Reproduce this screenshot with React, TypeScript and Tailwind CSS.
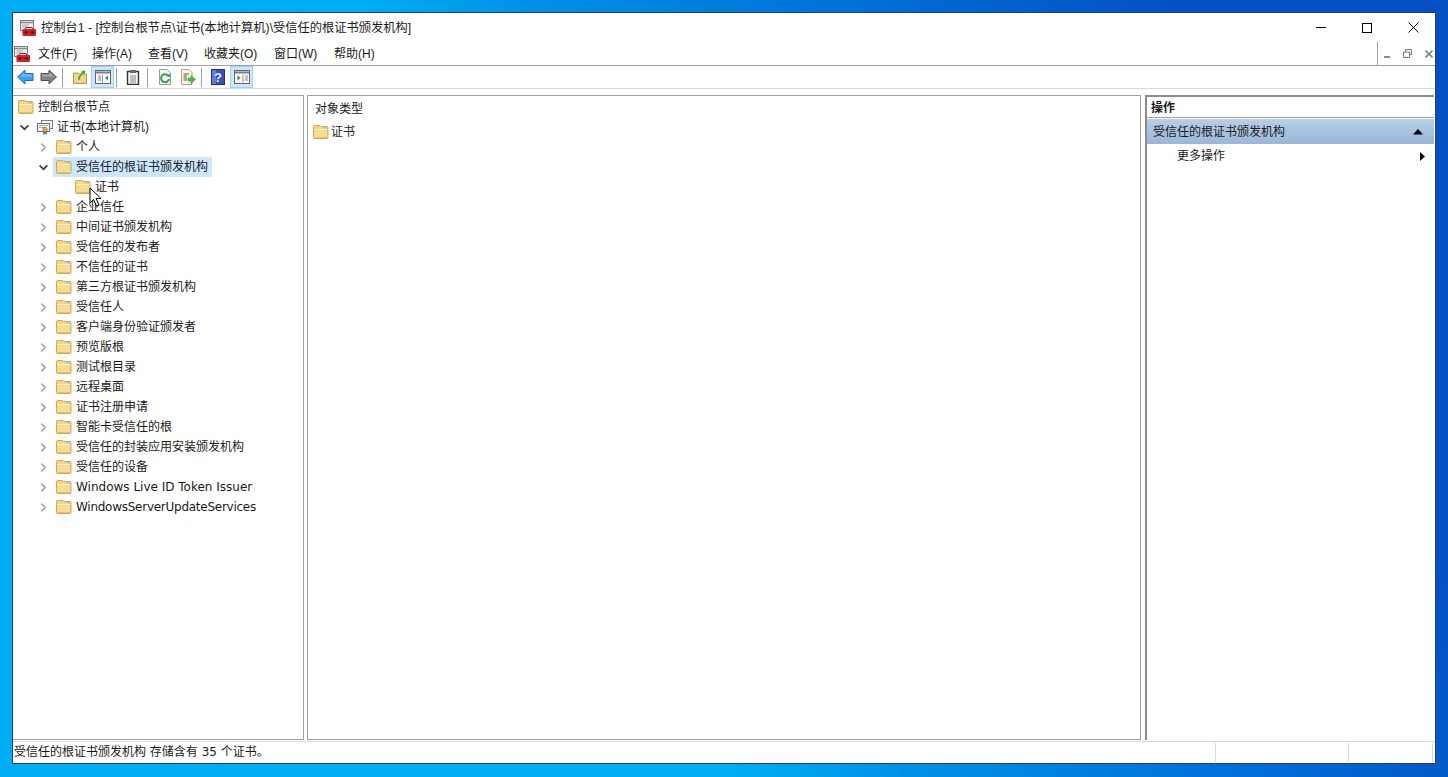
import React from 'react'

const FONT = "font-['Liberation_Sans','Noto_Sans_CJK_SC',sans-serif]"
const WIDE = "font-['DejaVu_Sans','Noto_Sans_CJK_SC',sans-serif]"

const TREE = [
  '企业信任',
  '中间证书颁发机构',
  '受信任的发布者',
  '不信任的证书',
  '第三方根证书颁发机构',
  '受信任人',
  '客户端身份验证颁发者',
  '预览版根',
  '测试根目录',
  '远程桌面',
  '证书注册申请',
  '智能卡受信任的根',
  '受信任的封装应用安装颁发机构',
  '受信任的设备',
  'Windows Live ID Token Issuer',
  'WindowsServerUpdateServices',
]

const MENUS = [
  { label: '文件(F)', width: 'w-[54px]' },
  { label: '操作(A)', width: 'w-[56px]' },
  { label: '查看(V)', width: 'w-[56px]' },
  { label: '收藏夹(O)', width: 'w-[70px]' },
  { label: '窗口(W)', width: 'w-[60px]' },
  { label: '帮助(H)', width: 'w-[60px]' },
]

function Folder() {
  return (
    <svg width="16" height="16" viewBox="0 0 16 16" className="shrink-0">
      <path d="M0.5 3 V13.5 a1 1 0 0 0 1 1 H14 a1 1 0 0 0 1-1 V3.5 a1 1 0 0 0-1-1 H8 L7 1.5 H2 a1.5 1.5 0 0 0-1.5 1.5 Z" fill="#f4d684" stroke="#cfab5e" />
      <path d="M1.5 5.5 H14" stroke="#fdf1c8" />
      <path d="M1.5 6.5 H14 V13.5 H1.5 Z" fill="#f7dd94" />
      <path d="M10.5 3 H14 V4.5 H10.5 Z" fill="#9ccbea" />
      <path d="M1.5 13.5 H14" stroke="#e3be6e" />
    </svg>
  )
}

function MmcIcon() {
  return (
    <svg width="16" height="16" viewBox="0 0 16 16" className="shrink-0">
      <rect x="0.5" y="0.5" width="13" height="10" fill="#ececec" stroke="#7c7c7c" />
      <path d="M1 2.5 H13" stroke="#8a8a8a" strokeWidth="1.5" />
      <path d="M2.5 5 H9 M2.5 7 H7" stroke="#a5a5a5" />
      <path d="M5 9 L6 7.5 H12 L13 9" fill="none" stroke="#7a1b1b" />
      <rect x="2.5" y="9" width="13.5" height="7" rx="1" fill="#c9252b" />
      <rect x="2.5" y="11.5" width="13.5" height="1" fill="#9c1a1f" />
      <rect x="5" y="11.5" width="2" height="2" fill="#3a0a0a" />
      <rect x="11.5" y="11.5" width="2" height="2" fill="#3a0a0a" />
    </svg>
  )
}

function CertIcon() {
  return (
    <svg width="16" height="16" viewBox="0 0 16 16" className="shrink-0">
      <rect x="4.5" y="1.5" width="11" height="8" fill="#f4f4f4" stroke="#6f7f8c" />
      <rect x="0.5" y="4.5" width="12" height="8" fill="#fff" stroke="#5f6f7c" />
      <path d="M2 6.5 H11 M2 8.5 H7" stroke="#9ab" />
      <path d="M6.5 12 L6 16 L8 14.5 L10 16 L9.5 12" fill="#2f6fd0" />
      <circle cx="8" cy="10.5" r="2.2" fill="#e9b63a" stroke="#a87a1c" />
    </svg>
  )
}

function Chevron({ open }: { open?: boolean }) {
  return (
    <svg width="9" height="9" viewBox="0 0 9 9" className="shrink-0">
      {open ? (
        <path d="M0.6 2.3 L4.5 6.2 L8.4 2.3" fill="none" stroke="#404040" strokeWidth="1.7" />
      ) : (
        <path d="M2.3 0.6 L6.2 4.5 L2.3 8.4" fill="none" stroke="#a6a6a6" strokeWidth="1.7" />
      )}
    </svg>
  )
}

function ToolBtn({ active, className = '', children }: { active?: boolean; className?: string; children: React.ReactNode }) {
  return (
    <div className={`w-[23px] h-[22px] flex items-center justify-center border ${active ? 'bg-[#cce8ff] border-[#99d1ff]' : 'border-transparent'} ${className}`}>
      {children}
    </div>
  )
}

function Sep({ className }: { className: string }) {
  return <div className={`w-px h-[19px] bg-[#a0a0a0] ${className}`} />
}

function Arrow({ left, color, line }: { left?: boolean; color: string; line: string }) {
  return (
    <svg width="17" height="16" viewBox="0 0 17 16">
      <path
        d={left ? 'M0.5 8 L8 1 V4.5 H16 V11.5 H8 V15 Z' : 'M16.5 8 L9 1 V4.5 H1 V11.5 H9 V15 Z'}
        fill={color}
        stroke={line}
      />
      <path d={left ? 'M3 8 L7.5 3.5 V5.5 H15 V7.5 H5 Z' : 'M14 8 L9.5 3.5 V5.5 H2 V7.5 H12 Z'} fill="#ffffff" fillOpacity="0.3" />
    </svg>
  )
}

function PaneIcon({ side }: { side: 'left' | 'right' }) {
  return (
    <svg width="16" height="16" viewBox="0 0 16 16">
      <rect x="0.5" y="1.5" width="15" height="13" fill="#f8f8f8" stroke="#666" />
      <path d="M1 3.5 H15" stroke="#808080" strokeWidth="2" />
      {side === 'left' ? (
        <>
          <path d="M3 7 H6 M3 9 H6 M3 11 H6" stroke="#6c8ebf" />
          <path d="M7.5 5.5 V13.5" stroke="#999" />
          <path d="M13 6.5 L10 9 L13 11.5 Z" fill="#22a04a" />
        </>
      ) : (
        <>
          <path d="M11 7 H14 M11 9 H14 M11 11 H14" stroke="#6c8ebf" />
          <path d="M9 5.5 V13.5" stroke="#999" />
          <path d="M3.5 6.5 L6.5 9 L3.5 11.5 Z" fill="#22a04a" />
        </>
      )}
    </svg>
  )
}

function Toolbar() {
  return (
    <div className="h-[22px] flex items-center pl-px">
      <ToolBtn><Arrow left color="#3f9fea" line="#1f6fc0" /></ToolBtn>
      <ToolBtn><Arrow color="#858585" line="#4f4f4f" /></ToolBtn>
      <Sep className="ml-[2px] mr-[5px]" />
      <ToolBtn>
        <svg width="16" height="16" viewBox="0 0 16 16">
          <path d="M1.5 4 H6 L7 5 H14.5 V14.5 H1.5 Z" fill="#f3d58a" stroke="#b89a58" />
          <path d="M6 11 C6 7 8 5 10 4 L8.5 3 L13 1 L13 5.5 L11.5 4.5 C9.5 6 8 8 7.5 11 Z" fill="#4aa83c" />
        </svg>
      </ToolBtn>
      <ToolBtn active><PaneIcon side="left" /></ToolBtn>
      <Sep className="ml-[2px] mr-[4px]" />
      <ToolBtn>
        <svg width="16" height="16" viewBox="0 0 16 16">
          <rect x="2.5" y="2.5" width="11" height="13" fill="#f4f4f4" stroke="#333" strokeWidth="1.4" />
          <rect x="5" y="1" width="6" height="3" fill="#666" />
          <path d="M5 7 H11 M5 9 H11 M5 11 H11 M5 13 H11" stroke="#888" />
        </svg>
      </ToolBtn>
      <Sep className="ml-[3px] mr-[5px]" />
      <ToolBtn>
        <svg width="16" height="16" viewBox="0 0 16 16">
          <path d="M2.5 0.5 H10 L13.5 4 V15.5 H2.5 Z" fill="#fafafa" stroke="#999" />
          <path d="M11 6.5 A4 4 0 1 0 12 10" fill="none" stroke="#2f9e44" strokeWidth="2" />
          <path d="M9.5 7.5 L13 8 L13 4.5 Z" fill="#2f9e44" />
        </svg>
      </ToolBtn>
      <ToolBtn>
        <svg width="16" height="16" viewBox="0 0 16 16">
          <path d="M1.5 0.5 H9 L12 3.5 V15.5 H1.5 Z" fill="#fbf6df" stroke="#a9a58c" />
          <path d="M3.5 5 H9 M3.5 7 H7 M3.5 9 H7 M3.5 11 H7" stroke="#555" />
          <path d="M8 9 H11 V6.5 L15.5 10.5 L11 14.5 V12 H8 Z" fill="#58b947" stroke="#2f8a32" strokeWidth="0.5" />
        </svg>
      </ToolBtn>
      <Sep className="ml-[2px] mr-[4px]" />
      <ToolBtn>
        <svg width="16" height="16" viewBox="0 0 16 16">
          <rect x="1.5" y="0.5" width="13" height="15" fill="#3554b4" stroke="#1f2f7a" />
          <rect x="2" y="1" width="4" height="14" fill="#5f7dd0" />
          <text x="8" y="13" textAnchor="middle" fontSize="13" fontWeight="700" fill="#e8ecfa" fontFamily="Liberation Sans">?</text>
        </svg>
      </ToolBtn>
      <ToolBtn active className="ml-px"><PaneIcon side="right" /></ToolBtn>
    </div>
  )
}

function Row({ pad, chevron, selected, icon, label }: { pad: string; chevron?: 'open' | 'closed'; selected?: boolean; icon?: React.ReactNode; label: string }) {
  return (
    <div className={`h-5 flex items-center ${pad}`}>
      {chevron && (
        <div className="w-[19px] flex items-center justify-center">
          <Chevron open={chevron === 'open'} />
        </div>
      )}
      <div className={`h-5 flex items-center pl-[3px] pr-[4px] gap-[4px] ${selected ? 'bg-[#cce8ff]' : ''}`}>
        {icon ?? <Folder />}
        <span className={`whitespace-nowrap ${label.startsWith('Windows') ? WIDE : ''} ${label === 'WindowsServerUpdateServices' ? 'tracking-[-0.26px]' : ''}`}>{label}</span>
      </div>
    </div>
  )
}

export default function App() {
  return (
    <div className={`${FONT} w-[1448px] h-[777px] overflow-hidden p-3 bg-[linear-gradient(64deg,#00aef6_40%,#0090e6_50%,#0074da_65%,#0450c2_85%)] text-[12px] leading-5 text-[#1a1a1a]`}>
      <div className="relative h-[752px] bg-white border border-[#26415e] flex flex-col">
        {/* title bar */}
        <div className="h-[29px] flex items-center pl-[7px] shrink-0">
          <MmcIcon />
          <span className="ml-[5px] text-[12.25px]">控制台1 - [控制台根节点\证书(本地计算机)\受信任的根证书颁发机构]</span>
          <div className="ml-auto -mr-px flex items-center">
            <div className="w-[46px] h-[29px] flex items-center justify-center">
              <div className="w-[10px] h-px bg-black" />
            </div>
            <div className="w-[46px] h-[29px] flex items-center justify-center">
              <div className="w-[10px] h-[10px] border border-black" />
            </div>
            <div className="w-[46px] h-[29px] flex items-center justify-center">
              <svg width="11" height="11" viewBox="0 0 11 11">
                <path d="M0.5 0.5 L10.5 10.5 M10.5 0.5 L0.5 10.5" stroke="#000" />
              </svg>
            </div>
          </div>
        </div>

        {/* menu bar */}
        <div className="h-6 shrink-0 flex items-center border-b border-[#a0a0a0] pl-px">
          <MmcIcon />
          <div className="flex ml-[8px]">
            {MENUS.map(m => (
              <span key={m.label} className={`whitespace-nowrap ${m.width}`}>{m.label}</span>
            ))}
          </div>
          <div className="ml-auto h-[23px] w-[58px] border-l border-[#a0a0a0] flex items-center gap-[13px] pl-[6px] text-[#777]">
            <div className="w-[6px] h-[2px] bg-[#888] mt-[6px]" />
            <svg width="9" height="9" viewBox="0 0 9 9">
              <path d="M2.5 2.5 V0.5 H8.5 V5.5 H6.5 M0.5 3 H6.5 V8.5 H0.5 Z" fill="none" stroke="#777" />
            </svg>
            <svg width="8" height="8" viewBox="0 0 8 8">
              <path d="M0.5 0.5 L7.5 7.5 M7.5 0.5 L0.5 7.5" stroke="#888" strokeWidth="1.7" />
            </svg>
          </div>
        </div>

        {/* tool bar */}
        <div className="h-[23px] shrink-0 border-b border-[#d9d9d9]">
          <Toolbar />
        </div>

        {/* panes */}
        <div className="flex-1 min-h-0 flex pt-[6px] bg-white">
          <div className="w-[291px] shrink-0 border border-l-0 border-[#a0a0a0] pt-[1px]">
            <Row pad="pl-[2px]" label="控制台根节点" />
            <Row pad="pl-[2px]" chevron="open" icon={<CertIcon />} label="证书(本地计算机)" />
            <Row pad="pl-[21px]" chevron="closed" label="个人" />
            <Row pad="pl-[21px]" chevron="open" selected label="受信任的根证书颁发机构" />
            <Row pad="pl-[59px]" label="证书" />
            {TREE.map(t => (
              <Row key={t} pad="pl-[21px]" chevron="closed" label={t} />
            ))}
          </div>
          <div className="w-[834px] shrink-0 ml-[3px] border border-[#a0a0a0] px-[5px]">
            <div className="h-[26px] pl-[2px] flex items-center">对象类型</div>
            <div className="flex items-center gap-[2px] h-5">
              <Folder />
              <span>证书</span>
            </div>
          </div>
          <div className="flex-1 ml-[4px] mr-px border-l-2 border-t-2 border-[#8c8c8c] flex flex-col">
            <div className="h-[21px] shrink-0 pl-[4px] pt-px flex items-center font-bold border-b border-[#a0a0a0]">操作</div>
            <div className="h-[25px] mt-px shrink-0 pl-[6px] pr-[11px] flex items-center justify-between bg-gradient-to-b from-[#b7cfe8] to-[#9ab7d6]">
              <span>受信任的根证书颁发机构</span>
              <svg width="10" height="6" viewBox="0 0 10 6">
                <path d="M5 0 L10 5.5 H0 Z" fill="#000" />
              </svg>
            </div>
            <div className="h-6 shrink-0 pl-[30px] pr-[9px] flex items-center justify-between">
              <span>更多操作</span>
              <svg width="5" height="9" viewBox="0 0 5 9">
                <path d="M0 0 L5 4.5 L0 9 Z" fill="#000" />
              </svg>
            </div>
          </div>
        </div>

        {/* status bar */}
        <div className="h-[22px] shrink-0 mt-px flex border-t border-[#d9d9d9]">
          <div className={`${WIDE} flex-1 pl-px pb-[2px] flex items-center`}>受信任的根证书颁发机构 存储含有 35 个证书。</div>
          <div className="w-[133px] my-[1px] border-l border-[#d9d9d9]" />
          <div className="w-[85px] my-[1px] border-l border-r border-[#d9d9d9] mr-[2px]" />
        </div>

        {/* mouse pointer captured with the screenshot */}
        <svg width="15" height="22" viewBox="0 0 15 22" className="absolute left-[76px] top-[174px]">
          <path d="M1 1 V16 L4.5 12.5 L7.5 19 L10 18 L7 11.5 H12 Z" fill="#fff" stroke="#000" />
        </svg>
      </div>
    </div>
  )
}
